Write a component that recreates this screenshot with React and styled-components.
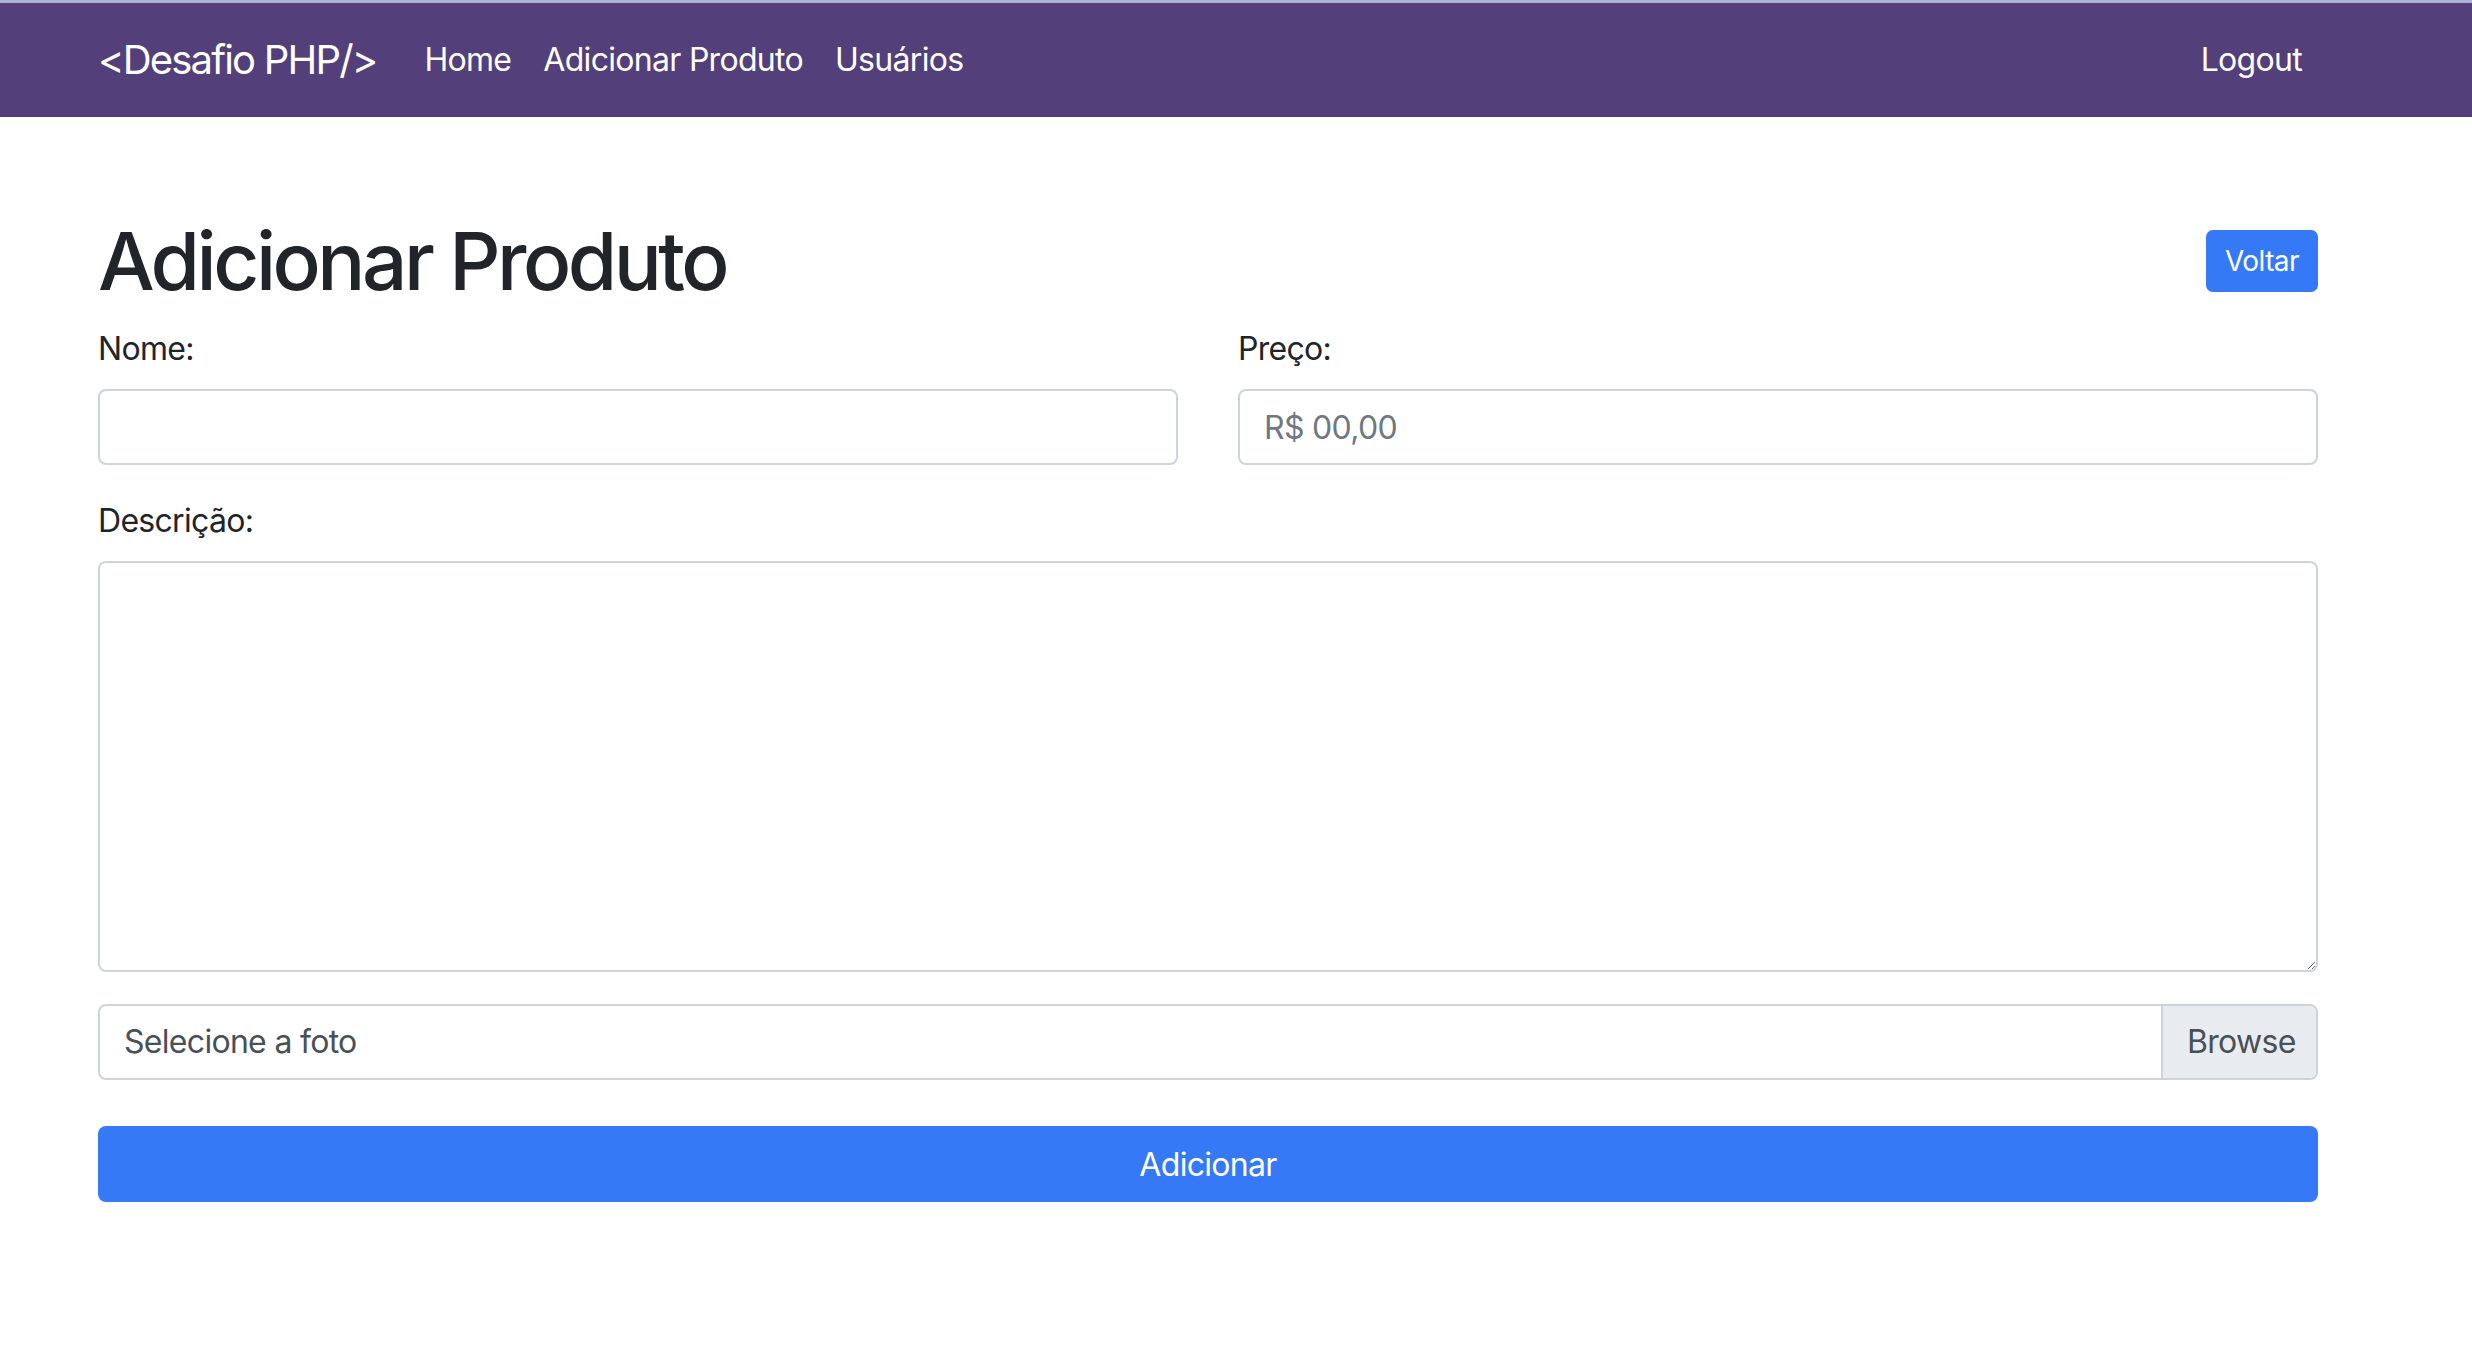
import React from 'react'
import styled, { createGlobalStyle } from 'styled-components'

const GlobalStyle = createGlobalStyle`
  * { box-sizing: border-box; }
  body {
    margin: 0;
    background: #fff;
    color: #212529;
    font-family: Inter, "Noto Sans", Arial, sans-serif;
    font-size: 32px;
    line-height: 1.5;
    letter-spacing: -0.7px;
  }
`

const Shell = styled.div`
  width: 2220px;
  margin-left: 98px;
`

const Navbar = styled.nav`
  border-top: 3px solid #a9b4d4;
  background: #533f7a;
  height: 117px;
`

const NavInner = styled(Shell)`
  display: flex;
  align-items: center;
  height: 114px;
`

const Brand = styled.a`
  color: #fff;
  font-size: 40px;
  line-height: 60px;
  letter-spacing: -1.8px;
  margin-right: 32px;
  text-decoration: none;
`

const NavList = styled.div`
  display: flex;
  flex: 1;
  align-items: center;
`

const NavLink = styled.a`
  color: #fff;
  font-size: 32px;
  padding: 16px;
  text-decoration: none;
  margin-left: ${p => (p.$push ? 'auto' : '0')};
`

const Main = styled(Shell)`
  padding-top: 96px;
`

const Header = styled.div`
  display: flex;
  align-items: center;
  justify-content: space-between;
  margin-bottom: 16px;
`

const Title = styled.h1`
  margin: 0;
  font-size: 80px;
  font-weight: 500;
  line-height: 96px;
  letter-spacing: -3.5px;
`

const SmallButton = styled.button`
  background: #3579f6;
  color: #fff;
  border: 2px solid #3579f6;
  border-radius: 7px;
  font-family: inherit;
  font-size: 28px;
  line-height: 42px;
  letter-spacing: -0.6px;
  padding: 8px 16px;
  width: 112px;
`

const Row = styled.div`
  display: grid;
  grid-template-columns: 1fr 1fr;
  column-gap: 60px;
`

const Group = styled.div`
  margin-bottom: 32px;
`

const Label = styled.label`
  display: block;
  font-size: 32px;
  line-height: 48px;
  margin-bottom: 16px;
`

const Input = styled.input`
  display: block;
  width: 100%;
  height: 76px;
  padding: 12px 24px;
  border: 2px solid #ced4da;
  border-radius: 8px;
  font-family: inherit;
  font-size: 32px;
  letter-spacing: -0.7px;
  color: #495057;
  &::placeholder { color: #6f7781; }
`

const TextArea = styled.textarea`
  display: block;
  width: 100%;
  height: 411px;
  padding: 12px 24px;
  border: 2px solid #ced4da;
  border-radius: 8px;
  font-family: inherit;
  font-size: 32px;
  resize: vertical;
`

const FileBox = styled.div`
  display: flex;
  height: 76px;
  border: 2px solid #ced4da;
  border-radius: 8px;
  overflow: hidden;
  margin-bottom: 46px;
`

const FileText = styled.span`
  flex: 1;
  padding: 0 24px;
  line-height: 72px;
  color: #495057;
`

const FileButton = styled.span`
  width: 155px;
  padding: 0 24px;
  line-height: 72px;
  background: #e9ecef;
  border-left: 2px solid #ced4da;
  color: #495057;
`

const SubmitButton = styled.button`
  display: block;
  width: 100%;
  height: 76px;
  background: #3579f6;
  color: #fff;
  border: none;
  border-radius: 8px;
  font-family: inherit;
  font-size: 32px;
  letter-spacing: -0.7px;
`

export default function App() {
  return (
    <>
      <GlobalStyle />
      <Navbar>
        <NavInner>
          <Brand href="#">&lt;Desafio PHP/&gt;</Brand>
          <NavList>
            <NavLink href="#">Home</NavLink>
            <NavLink href="#">Adicionar Produto</NavLink>
            <NavLink href="#">Usuários</NavLink>
            <NavLink href="#" $push>Logout</NavLink>
          </NavList>
        </NavInner>
      </Navbar>
      <Main>
        <Header>
          <Title>Adicionar Produto</Title>
          <SmallButton>Voltar</SmallButton>
        </Header>
        <Row>
          <Group>
            <Label>Nome:</Label>
            <Input type="text" />
          </Group>
          <Group>
            <Label>Preço:</Label>
            <Input type="text" placeholder="R$ 00,00" />
          </Group>
        </Row>
        <Group>
          <Label>Descrição:</Label>
          <TextArea />
        </Group>
        <FileBox>
          <FileText>Selecione a foto</FileText>
          <FileButton>Browse</FileButton>
        </FileBox>
        <SubmitButton>Adicionar</SubmitButton>
      </Main>
    </>
  )
}
